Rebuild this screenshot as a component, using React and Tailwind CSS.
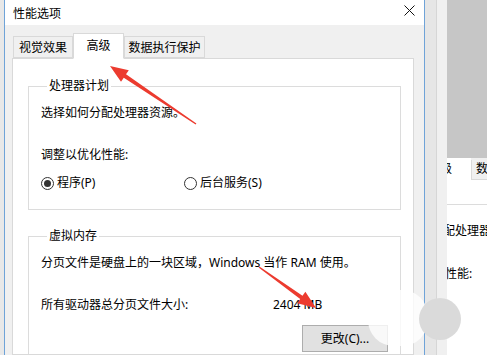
import React from 'react';

const Radio = ({ checked }) => (
  <span className="w-[13px] h-[13px] rounded-full border border-[#333] bg-white flex items-center justify-center shrink-0">
    {checked && <span className="w-[7px] h-[7px] rounded-full bg-[#333]" />}
  </span>
);

const Tab = ({ label, active, width }) =>
  active ? (
    <div
      className={`${width} h-[26px] -mb-px relative z-10 bg-white border border-[#d9d9d9] border-b-white flex items-start justify-center pt-[4px]`}
    >
      {label}
    </div>
  ) : (
    <div className={`${width} h-[22px] bg-[#f0f0f0] border border-[#d9d9d9] flex items-start justify-center pt-[3px]`}>
      {label}
    </div>
  );

const Arrows = () => (
  <svg className="absolute inset-0 pointer-events-none" width="487" height="355" viewBox="0 0 487 355">
    <polygon
      points="110,66 128.8,70.2 126,74.3 196.4,123.4 195.6,124.6 123.8,77.7 121,81.8"
      fill="#ec3b2f"
    />
    <polygon
      points="316,308 297.2,303.2 300.2,299.1 258.6,267.6 259.4,266.4 302.5,295.8 305.4,291.7"
      fill="#ec3b2f"
    />
  </svg>
);

export default function App() {
  return (
    <div className="relative w-[487px] h-[355px] overflow-hidden flex bg-[#f0f0f0] text-[12px] leading-4 text-black font-['Noto_Sans','Noto_Sans_CJK_SC',sans-serif]">
      {/* left edge of the window behind */}
      <div className="w-[4px] shrink-0 bg-[#e8e8e8]" />

      {/* dialog */}
      <div className="w-[421px] shrink-0 flex flex-col overflow-hidden border-l border-r border-[#6fa3d8]">
        <div className="h-[25px] shrink-0 bg-white flex items-center justify-between pl-[8px] pr-[9px] pt-[2px]">
          <span>性能选项</span>
          <svg width="11" height="11" viewBox="0 0 11 11" className="-mt-[6px]">
            <path d="M0.5 0.5 L10.5 10.5 M10.5 0.5 L0.5 10.5" stroke="#111" strokeWidth="1" />
          </svg>
        </div>

        <div className="flex-1 min-h-0 flex flex-col pt-[8px] pl-[7px] pr-[10px]">
          <div className="flex items-end h-[25px] shrink-0 pl-[1px]">
            <Tab label="视觉效果" width="w-[60px]" />
            <Tab label="高级" width="w-[51px]" active />
            <Tab label="数据执行保护" width="w-[81px]" />
          </div>

          <div className="flex-1 min-h-0 overflow-hidden bg-white border border-[#d9d9d9] pl-[15px]">
            <fieldset className="mt-[19px] w-[373px] border border-[#dcdcdc] pl-[12px] pb-[18px]">
              <legend className="ml-[6px] px-[2px]">处理器计划</legend>
              <div className="pt-[11px]">选择如何分配处理器资源。</div>
              <div className="mt-[26px]">调整以优化性能:</div>
              <div className="mt-[12px] flex items-center">
                <div className="w-[143px] flex items-center gap-[3px]">
                  <Radio checked />
                  <span>程序(P)</span>
                </div>
                <div className="flex items-center gap-[3px]">
                  <Radio />
                  <span>后台服务(S)</span>
                </div>
              </div>
            </fieldset>

            <fieldset className="mt-[18px] w-[373px] border border-[#dcdcdc] pl-[12px] pb-[20px]">
              <legend className="ml-[6px] px-[2px]">虚拟内存</legend>
              <div className="pt-[11px]">分页文件是硬盘上的一块区域，Windows 当作 RAM 使用。</div>
              <div className="mt-[26px] flex">
                <span className="w-[232px]">所有驱动器总分页文件大小:</span>
                <span>2404 MB</span>
              </div>
              <div className="mt-[12px] pl-[261px]">
                <button className="w-[86px] h-[27px] bg-[#e1e1e1] border border-[#adadad] flex items-center justify-center">
                  更改(C)...
                </button>
              </div>
            </fieldset>
          </div>
        </div>
      </div>

      {/* shadow strip */}
      <div className="w-[12px] shrink-0 bg-[#e6e6e6] border-r border-[#d6d6d6]" />
      <div className="w-[10px] shrink-0 bg-[#f0f0f0]" />

      {/* window behind */}
      <div className="flex-1 flex flex-col overflow-hidden">
        <div className="h-[158px] shrink-0 bg-[#c6c6c6]" />
        <div className="flex-1 bg-white flex flex-col">
          <div className="h-[22px] shrink-0 flex items-start bg-[#f0f0f0] border-b border-[#d9d9d9]">
            <div className="w-[24px] h-[22px] bg-white overflow-hidden pt-[3px]">
              <span className="-ml-[7px] block">级</span>
            </div>
            <div className="flex-1 h-[20px] mt-[2px] border-l border-[#d9d9d9] pl-[4px] pt-[1px] overflow-hidden">数</div>
          </div>
          <div className="h-[24px] shrink-0" />
          <div className="border-t border-[#dcdcdc] overflow-hidden">
            <div className="mt-[18px] -ml-[4px] whitespace-nowrap">配处理器</div>
            <div className="mt-[27px] -ml-[2px] whitespace-nowrap">性能:</div>
          </div>
        </div>
      </div>

      {/* watermark blob */}
      <div className="absolute left-[368px] top-[290px] w-[60px] h-[56px] rounded-[26px] bg-white/80" />
      <div className="absolute left-[419px] top-[298px] w-[42px] h-[42px] rounded-full bg-[#dadada]" />

      <Arrows />
    </div>
  );
}
